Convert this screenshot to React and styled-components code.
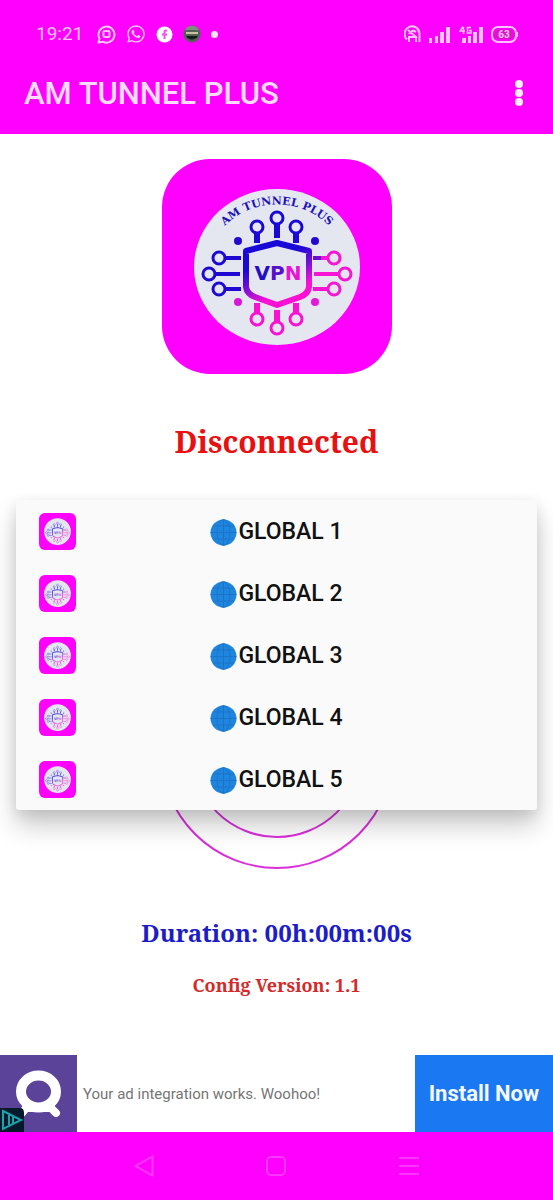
import React from 'react'
import styled, { createGlobalStyle } from 'styled-components'
import { FaWhatsapp } from 'react-icons/fa'

const GlobalStyle = createGlobalStyle`
  * {
    box-sizing: border-box;
  }
  body {
    margin: 0;
    background: #fff;
    font-family: Roboto, sans-serif;
  }
  button {
    padding: 0;
    border: 0;
    background: none;
    color: inherit;
    font-family: inherit;
    cursor: pointer;
  }
  svg {
    display: block;
  }
`

const Page = styled.div`
  display: flex;
  flex-direction: column;
  min-height: 100vh;
`

const StatusBar = styled.div`
  display: flex;
  align-items: center;
  justify-content: space-between;
  height: 54px;
  padding: 14px 35px 0 36px;
  background: #f0f;
  color: #ffc4ff;
  font-size: 19px;
  line-height: 24px;
`

const StatusGroup = styled.div`
  display: flex;
  align-items: center;
  gap: ${(props) => props.$gap}px;

  span {
    margin-right: 4px;
  }
`

const AppBar = styled.header`
  display: flex;
  align-items: center;
  justify-content: space-between;
  height: 80px;
  padding: 0 24px;
  background: #f0f;
  color: #ffdcff;

  h1 {
    margin: 0;
    font-size: 31px;
    line-height: 40px;
    font-weight: 500;
  }
`

const Main = styled.main`
  display: flex;
  flex: 1;
  flex-direction: column;
  align-items: center;
  padding: 25px 16px 32px;
`

const SerifText = styled.p`
  margin: ${(props) => props.$top}px 0 0;
  color: ${(props) => props.$color};
  font-family: 'Noto Serif', 'DejaVu Serif Condensed', 'DejaVu Serif', serif;
  font-size: ${(props) => props.$size}px;
  line-height: ${(props) => props.$line}px;
  font-weight: bold;
`

const ServerPicker = styled.div`
  position: relative;
  width: 100%;
  height: 60px;
  margin-top: 38px;
`

const ServerMenu = styled.ul`
  position: absolute;
  top: 0;
  left: 0;
  right: 0;
  z-index: 1;
  margin: 0;
  padding: 0;
  list-style: none;
  background: #fafafa;
  border-radius: 3px;
  box-shadow: 0 16px 26px rgba(0, 0, 0, 0.2), 0 4px 14px rgba(0, 0, 0, 0.1);
`

const ServerRow = styled.button`
  display: grid;
  grid-template-columns: 1fr auto 1fr;
  align-items: center;
  width: 100%;
  height: 62px;
  padding: 0 23px;
  color: #111;
  font-size: 23px;
  line-height: 28px;
  font-weight: 500;
`

const ServerName = styled.span`
  display: flex;
  align-items: center;
  gap: 1px;
  padding-top: 2px;
`

const ConnectButton = styled.button`
  margin-top: 75px;
`

const AdBanner = styled.aside`
  display: flex;
  align-items: stretch;
  height: 77px;
  background: #fff;
`

const AdText = styled.p`
  flex: 1;
  align-self: center;
  margin: 0;
  padding: 0 6px;
  color: #757575;
  font-size: 15px;
  line-height: 20px;
`

const InstallButton = styled.button`
  width: 25%;
  min-width: 138px;
  background: #1a78f2;
  color: #f4f8ff;
  font-size: 22px;
  line-height: 28px;
  font-weight: 700;
`

const NavBar = styled.nav`
  display: grid;
  grid-template-columns: repeat(3, 1fr);
  justify-items: center;
  align-items: center;
  height: 68px;
  padding: 0 14%;
  background: #f0f;
  color: #ff38ff;
`

const servers = ['GLOBAL 1', 'GLOBAL 2', 'GLOBAL 3', 'GLOBAL 4', 'GLOBAL 5']

// x, y of the ring, then y where its stem ends
const pins = [
  [95, 68, 84],
  [115, 59, 79],
  [134, 68, 84],
  [95, 160, 144],
  [115, 169, 151],
  [134, 160, 144],
]

// x, y of the ring, then x where its stem ends
const sidePins = [
  [57, 99, 79],
  [47, 115, 78],
  [57, 130, 79],
  [172, 99, 151],
  [183, 115, 152],
  [172, 130, 151],
]

const Logo = ({ id, width, height, radius, small }) => {
  const paint = `url(#${id})`

  return (
    <svg width={width} height={height} viewBox="0 0 230 215" preserveAspectRatio="none" aria-hidden="true">
      <defs>
        <linearGradient id={id} gradientUnits="userSpaceOnUse" x1="113" y1="99" x2="127" y2="132">
          <stop offset="0" stopColor="#1a08d6" />
          <stop offset="0.5" stopColor="#7a10d8" />
          <stop offset="1" stopColor="#fb10d4" />
        </linearGradient>
        <path id={`${id}-arc`} d="M59 71 A 74 74 0 0 1 171 71" />
      </defs>
      <rect width="230" height="215" rx={radius} fill="#f0f" />
      <ellipse cx="115" cy="108" rx="83" ry="78" fill="#e4e7f0" />
      <g opacity={small ? 0.65 : 1}>
        {!small && (
          <text
            fill="#1d12b8"
            textAnchor="middle"
            fontFamily="'DejaVu Serif', serif"
            fontSize="11"
            fontWeight="bold"
          >
            <textPath href={`#${id}-arc`} startOffset="50%">
              AM TUNNEL PLUS
            </textPath>
          </text>
        )}
        <path
          d="M115 84 L84 92 V128 Q85 135 93 138 L115 146 L138 138 Q146 135 147 128 V92 Z"
          fill="none"
          stroke={paint}
          strokeWidth="6"
          strokeLinejoin="round"
        />
        {pins.map(([x, y, end]) => (
          <g key={`${x}-${y}`}>
            <rect x={x - 3} y={Math.min(y, end)} width="6" height={Math.abs(end - y)} fill={paint} />
            <circle cx={x} cy={y} r="6" fill="#e4e7f0" stroke={paint} strokeWidth="3" />
          </g>
        ))}
        {sidePins.map(([x, y, end]) => (
          <g key={`${x}-${y}`} stroke={x < 115 ? '#1f08d2' : '#f814d4'}>
            <path d={`M${x} ${y} H${end}`} strokeWidth="4" />
            <circle cx={x} cy={y} r="6" fill="#e4e7f0" strokeWidth="3" />
          </g>
        ))}
        <path d="M151 99 h8" stroke="#6a10d4" strokeWidth="4" />
        <circle cx="76" cy="82" r="4" fill="#2408d2" />
        <circle cx="153" cy="82" r="4" fill="#2408d2" />
        <circle cx="76" cy="143" r="4" fill="#d816d8" />
        <circle cx="153" cy="143" r="4" fill="#e816d8" />
        <text
          x="116"
          y="121"
          textAnchor="middle"
          fontFamily="'DejaVu Sans', sans-serif"
          fontSize="20"
          fontWeight="bold"
        >
          <tspan fill="#240cc8">V</tspan>
          <tspan fill="#5510cc">P</tspan>
          <tspan fill="#e814d4">N</tspan>
        </text>
      </g>
    </svg>
  )
}

const Globe = () => (
  <svg width="27" height="27" viewBox="0 0 27 27" aria-hidden="true">
    <circle cx="13.5" cy="13.5" r="13" fill="#1f86e0" />
    <g fill="none" stroke="#1c74c8" strokeWidth="1">
      <ellipse cx="13.5" cy="13.5" rx="6.5" ry="13" />
      <path d="M13.5 0.5 V26.5 M0.5 13.5 H26.5 M3 7 H24 M3 20 H24" />
    </g>
  </svg>
)

const ChatIcon = () => (
  <svg width="19" height="19" viewBox="0 0 19 19" fill="none" stroke="currentColor" strokeWidth="2">
    <path d="M1.5 17.5 L2.5 13.5 A8 8 0 1 1 6 16.8 Z" />
    <rect x="6.5" y="6" width="6" height="6" rx="1" />
  </svg>
)

const FacebookIcon = () => (
  <svg width="17" height="17" viewBox="0 0 17 17">
    <circle cx="8.5" cy="8.5" r="8" fill="#fff" />
    <path d="M11 4.5 H10 Q8.5 4.5 8.5 6.5 V13 M6 8.5 H11" fill="none" stroke="#f050f0" strokeWidth="2" />
  </svg>
)

const PhotoIcon = () => (
  <svg width="18" height="18" viewBox="0 0 18 18">
    <circle cx="9" cy="9" r="8.5" fill="#536257" />
    <path d="M2 5 A8 8 0 0 1 16 5 Z" fill="#7f8a80" />
    <path d="M3 8 H15" stroke="#c9c3a0" strokeWidth="2" />
    <path d="M3 11 H15 A7 7 0 0 1 3 11 Z" fill="#171c1a" />
  </svg>
)

const DotIcon = () => (
  <svg width="7" height="7" viewBox="0 0 7 7">
    <circle cx="3.5" cy="3.5" r="3.5" fill="#ffe4ff" />
  </svg>
)

const CallIcon = () => (
  <svg width="17" height="18" viewBox="0 0 17 18" fill="none" stroke="currentColor" strokeWidth="2">
    <path d="M3 14.5 A7.5 7.5 0 1 1 15.5 8.5 V17" />
    <path d="M4 5 L13 13 M5 9 Q8 4 12 7 M5 17 V12 H12 V17" />
  </svg>
)

const SignalIcon = () => (
  <svg width="22" height="17" viewBox="0 0 22 17" fill="currentColor">
    <path d="M0 12 h3 v5 h-3 Z M6 10 h3 v7 h-3 Z M11 6 h4 v11 h-4 Z M17 1 h4 v16 h-4 Z" />
  </svg>
)

const DataSignalIcon = () => (
  <svg width="24" height="17" viewBox="0 0 24 17">
    <path d="M3 12 h4 v5 h-4 Z M9 10 h3 v7 h-3 Z M14 6 h4 v11 h-4 Z M20 1 h4 v16 h-4 Z" fill="currentColor" />
    <path
      d="M4 0.5 L1 5 H6 M4.5 1 V8 M12 1.5 H8.5 V7 H12 V4.5 H10"
      fill="none"
      stroke="currentColor"
      strokeWidth="1.5"
    />
  </svg>
)

const BatteryIcon = () => (
  <svg width="27" height="17" viewBox="0 0 27 17">
    <rect x="1" y="1" width="24" height="15" rx="6" fill="none" stroke="currentColor" strokeWidth="2" />
    <rect x="4" y="4" width="18" height="9" rx="3" fill="#d818c0" />
    <path d="M26.5 6 v5" stroke="currentColor" />
    <text x="13" y="12" textAnchor="middle" fontSize="10" fontWeight="bold" fill="currentColor">
      63
    </text>
  </svg>
)

const MenuDots = () => (
  <svg width="20" height="28" viewBox="0 0 20 28" fill="#ffecff">
    <circle cx="10" cy="4" r="4" />
    <circle cx="10" cy="13" r="4" />
    <circle cx="10" cy="22" r="4" />
  </svg>
)

const Rings = () => (
  <svg width="234" height="234" viewBox="0 0 234 234" fill="none" stroke="#d92fdc" strokeWidth="2">
    <circle cx="117" cy="117" r="116" />
    <circle cx="117" cy="117" r="85" />
  </svg>
)

const AdIcon = () => (
  <svg width="77" height="77" viewBox="0 0 77 77" role="img" aria-label="Advertiser">
    <rect width="77" height="77" fill="#5a4398" />
    <ellipse cx="38.5" cy="36.5" rx="17.5" ry="16" fill="none" stroke="#fff" strokeWidth="10" />
    <path d="M22 50 H55 V57 H22 Z" fill="#fff" />
    <path d="M27 52 L22 58 M50 52 L56 58" stroke="#fff" strokeWidth="8" strokeLinecap="round" />
    <path d="M0 53 H20 Q24 53 24 58 V77 H0 Z" fill="#071a2b" />
    <path d="M3 56 L21 65 L3 74 Z M9 60 V70 M13 62 V68" fill="none" stroke="#1ba3ad" strokeWidth="2" />
  </svg>
)

const App = () => {
  return (
    <Page>
      <GlobalStyle />
      <StatusBar>
        <StatusGroup $gap={10}>
          <span>19:21</span>
          <ChatIcon />
          <FaWhatsapp size={20} />
          <FacebookIcon />
          <PhotoIcon />
          <DotIcon />
        </StatusGroup>
        <StatusGroup $gap={8}>
          <CallIcon />
          <SignalIcon />
          <DataSignalIcon />
          <BatteryIcon />
        </StatusGroup>
      </StatusBar>
      <AppBar>
        <h1>AM TUNNEL PLUS</h1>
        <button type="button" aria-label="More options">
          <MenuDots />
        </button>
      </AppBar>
      <Main>
        <Logo id="logo" width={230} height={215} radius={48} />
        <SerifText $top={48} $size={30} $line={40} $color="#e81010">
          Disconnected
        </SerifText>
        <ServerPicker>
          <ServerMenu>
            {servers.map((name, index) => (
              <li key={name}>
                <ServerRow type="button">
                  <Logo id={`server-${index}`} width={37} height={37} radius={36} small />
                  <ServerName>
                    <Globe />
                    {name}
                  </ServerName>
                </ServerRow>
              </li>
            ))}
          </ServerMenu>
        </ServerPicker>
        <ConnectButton type="button" aria-label="Connect">
          <Rings />
        </ConnectButton>
        <SerifText $top={48} $size={24} $line={32} $color="#1c1cc8">
          Duration: 00h:00m:00s
        </SerifText>
        <SerifText $top={24} $size={18} $line={24} $color="#d42a2a">
          Config Version: 1.1
        </SerifText>
      </Main>
      <AdBanner>
        <AdIcon />
        <AdText>Your ad integration works. Woohoo!</AdText>
        <InstallButton type="button">Install Now</InstallButton>
      </AdBanner>
      <NavBar>
        <button type="button" aria-label="Back">
          <svg width="20" height="22" viewBox="0 0 20 22" fill="none" stroke="currentColor" strokeWidth="2">
            <path d="M18.5 1.5 V20.5 L1.5 11 Z" />
          </svg>
        </button>
        <button type="button" aria-label="Home">
          <svg width="20" height="20" viewBox="0 0 20 20" fill="none" stroke="currentColor" strokeWidth="2">
            <rect x="1" y="1" width="18" height="18" rx="4" />
          </svg>
        </button>
        <button type="button" aria-label="Recent apps">
          <svg width="20" height="20" viewBox="0 0 20 20" stroke="currentColor" strokeWidth="2">
            <path d="M0 2 H20 M0 10 H20 M0 18 H20" />
          </svg>
        </button>
      </NavBar>
    </Page>
  )
}

export default App
